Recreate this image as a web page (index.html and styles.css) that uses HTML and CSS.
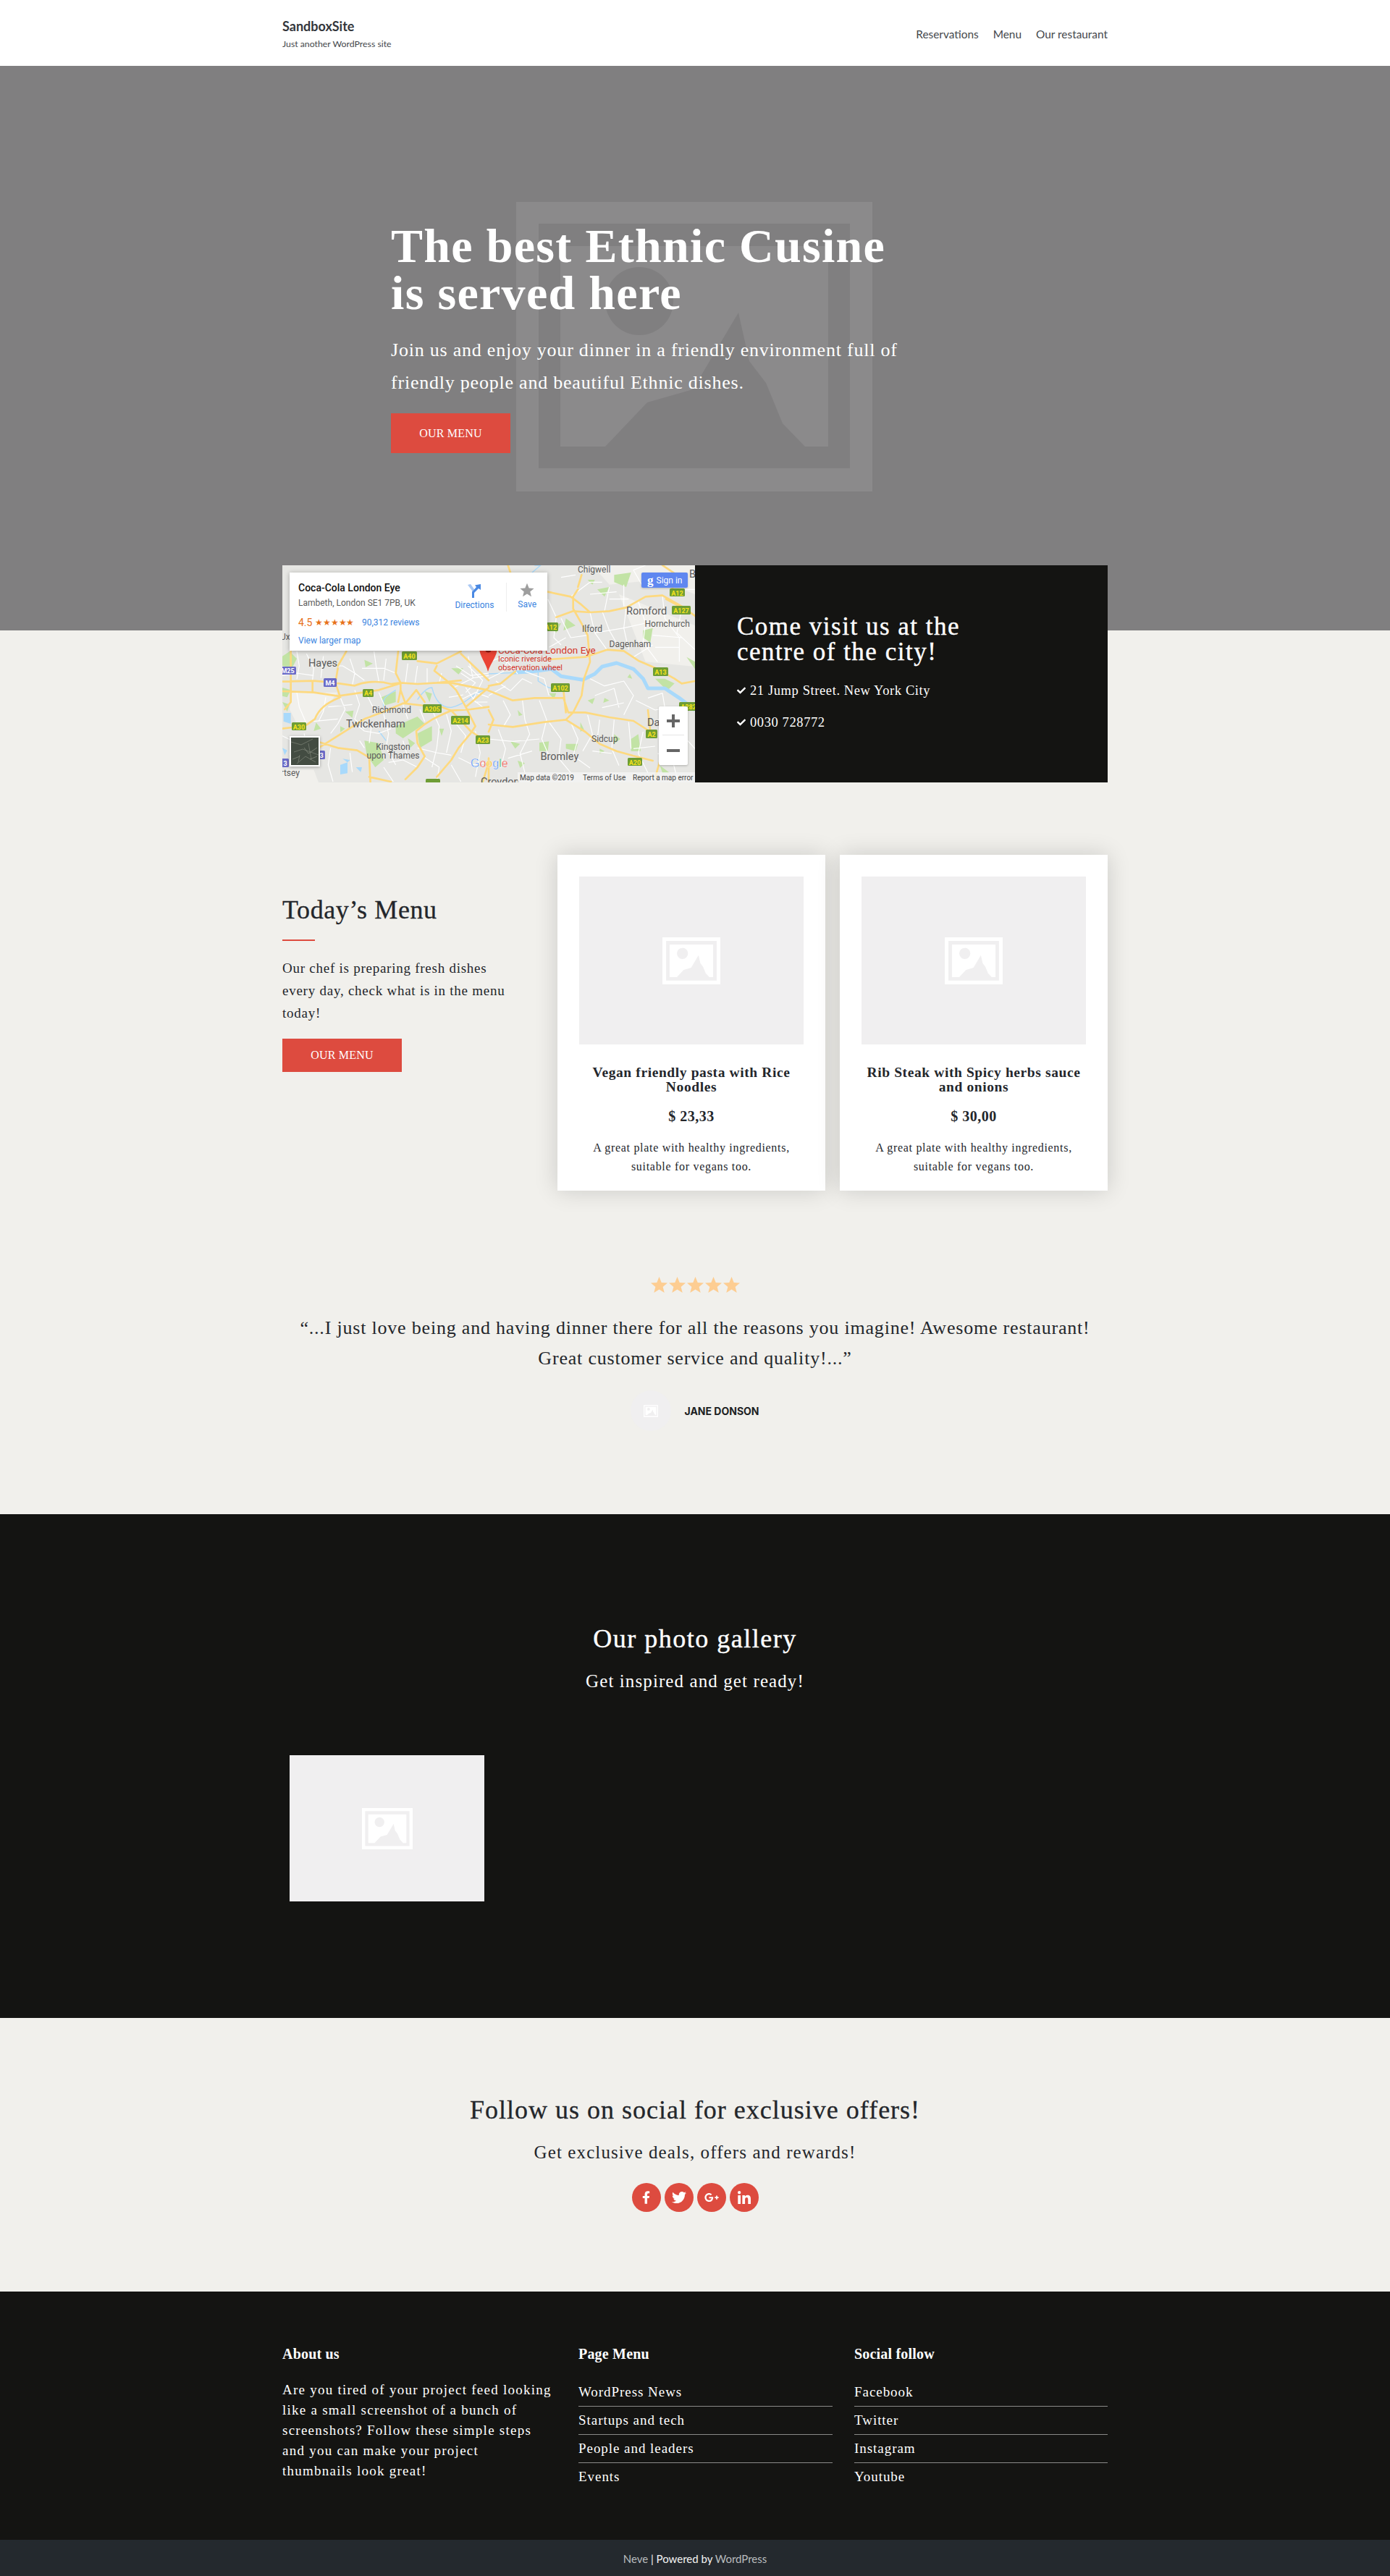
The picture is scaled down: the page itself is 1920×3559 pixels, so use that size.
FILE: index.html
```html
<!DOCTYPE html>
<html lang="en">
<head>
    <meta charset="UTF-8">
    <meta name="viewport" content="width=device-width, initial-scale=1.0">
    <title>SandboxSite</title>
    <link rel="stylesheet" href="styles.css">
</head>
<body>
    <svg class="sprites" width="0" height="0" aria-hidden="true">
        <symbol id="placeholder" viewBox="0 0 492 400">
            <path fill-rule="evenodd" d="M0 0H492V400H0Z M31 30V368H461V30Z"/>
            <path fill-rule="evenodd" d="M61 61H431V338H61Z M170 90A47 47 0 1 0 170.1 184A47 47 0 1 0 170 90Z M123 338L181 277L244 259L307 153L322 220L345 250L368 306L399 338Z"/>
        </symbol>
        <symbol id="star" viewBox="0 0 24 24">
            <path d="M12 1l3.2 8 8.3.6-6.4 5.3 2.1 8.1-7.2-4.5-7.2 4.5 2.1-8.1L.5 9.6 8.8 9z"/>
        </symbol>
        <symbol id="check" viewBox="0 0 512 512">
            <path d="M173.898 439.404l-166.4-166.4c-9.997-9.997-9.997-26.206 0-36.204l36.203-36.204c9.997-9.998 26.207-9.998 36.204 0L192 312.69 432.095 72.596c9.997-9.997 26.207-9.997 36.204 0l36.203 36.204c9.997 9.997 9.997 26.206 0 36.204l-294.4 294.401c-9.998 9.997-26.207 9.997-36.204-.001z"/>
        </symbol>
    </svg>

    <header class="site-header">
        <div class="wrap header-row">
            <div class="brand">
                <a class="brand-name" href="#">SandboxSite</a>
                <span class="brand-tag">Just another WordPress site</span>
            </div>
            <nav class="main-nav">
                <a href="#">Reservations</a>
                <a href="#">Menu</a>
                <a href="#">Our restaurant</a>
            </nav>
        </div>
    </header>

    <section class="hero">
        <svg class="hero-icon"><use href="#placeholder"/></svg>
        <div class="hero-text">
            <h1>The best Ethnic Cusine<br>is served here</h1>
            <p>Join us and enjoy your dinner in a friendly environment full of<br>friendly people and beautiful Ethnic dishes.</p>
            <a class="btn btn-hero" href="#">OUR MENU</a>
        </div>
    </section>

    <section class="wrap visit">
        <div class="map">
            <svg class="map-canvas" viewBox="0 0 570 300" width="570" height="300">
                <rect class="m-base" width="570" height="300"/>
                <!-- left half, drawn in 3x coordinates -->
                <g transform="translate(0,119) scale(.33333)">
                    <path class="m-light" d="M40 170H230L190 220L130 290L60 300L30 240Z M0 490H130L150 543H0Z"/>
                    <path class="m-green" d="M340 35L375 50L345 65Z M0 20L30 0L60 30L40 70L0 60Z M470 310L560 270L590 300L500 360L470 340Z M560 340L620 310L620 370L570 400Z M340 370L400 380L420 450L385 480L350 430Z M260 250L295 245L290 275Z M240 310L260 320L240 335Z M410 190L470 165L470 210L420 225Z M590 165L620 175L610 210Z M140 295L160 320L130 330Z M0 150L35 160L20 190L0 185Z M700 70L750 70L730 95Z M650 320L670 320L660 350Z M520 360L550 380L530 400Z M0 210L30 220L20 250Z"/>
                    <path class="m-water" d="M5 255L35 255L35 300L5 290Z M240 470L270 460L270 505L240 510Z M305 480L330 480L325 500Z M250 445L280 450L270 460Z M0 400L20 410L10 430Z"/>
                    <path class="m-river" d="M470 160C440 180 410 190 420 230 M560 200C580 170 600 150 620 150C630 190 650 235 700 232C760 220 780 180 835 160 M400 330L430 370"/>
                    <path class="m-minor" d="M60 0L70 60L60 115 M100 10L130 70L125 120 M170 20L160 110 M200 60L250 60L300 90L340 120 M280 30L300 90L290 140 M380 0L390 70L400 125 M430 30L420 120 M330 70L420 70L470 90 M0 100L60 90L130 100 M520 50L510 130 M560 60L550 130 M600 70L600 130 M660 90L650 130 M720 60L780 100L855 90 M770 20L790 110 M60 170L70 230L100 300 M180 190L170 250L150 290 M240 190L260 240L230 300L200 340 M300 160L320 220L300 280L340 320 M350 180L380 240 M400 170L430 240 M190 230L290 220 M130 290L230 280 M290 290L340 330L400 340L450 320 M420 260L440 340L430 400L470 470 M500 220L520 280 M570 240L590 290 M620 240L650 310L640 400L620 480 M680 260L700 330L680 420 M720 300L760 350L740 420 M800 330L820 420L800 520 M560 400L640 420L700 430 M590 440L650 480L640 540 M370 300L360 380 M320 370L340 400 M200 400L190 470L210 540 M280 420L290 500 M440 460L500 450L560 480 M420 480L460 540 M500 370L520 440 M730 440L790 470L850 460 M700 470L740 540 M740 90L800 130L760 170 M770 60L830 120L790 200L830 230 M710 150L790 110L855 100 M740 200L800 170L855 190 M690 190L750 180 M760 150L800 210L850 210 M0 350L40 370L30 430 M90 340L110 420"/>
                    <path class="m-road" d="M0 125L130 122L200 128L300 142C340 125 400 120 450 135L490 130L560 135L640 130L740 120 M0 165L130 170L230 185L335 170L400 160L490 132 M240 190C180 215 150 240 135 280L100 305L40 315L0 320 M150 400L230 350L340 280L420 250L500 215L590 225L660 230L700 245L780 240L855 230 M150 375L230 400L310 410L360 440L365 543 M555 330C600 290 640 270 700 245 M555 330L560 380L590 435L560 480L510 530 M35 0L35 125L35 210L10 240 M125 125V170 M230 70L220 130L240 190 M265 0L230 60 M480 0L470 90L490 130L490 160L480 210 M490 160L510 215 M640 60L630 80L680 120L720 160L760 230L800 310L780 340L730 400L700 450L640 520 M560 40L640 50L700 20L740 0 M700 245L780 330L855 380 M855 150L760 230 M740 10L855 120 M640 130L700 130L850 160 M590 210L555 160L510 215 M360 520L450 540 M855 460L830 543"/>
                </g>
                <!-- right half -->
                <g transform="translate(285,0) scale(.33333)">
                    <path class="m-light" d="M430 0H855V120L700 60L500 80Z M540 120L855 250V420L650 400Z"/>
                    <path class="m-green" d="M520 40L590 30L570 90L520 70Z M410 60L440 60L430 80Z M320 220L360 250L310 270Z M450 100L500 90L480 130Z M640 270L680 260L670 320L640 300Z M730 470L770 490L740 520L690 470Z M585 450L595 470L575 465Z M250 530L280 530L270 555Z M590 720L620 700L630 770L590 770Z M520 700L545 720L520 740Z M210 735L250 730L245 770L210 770Z M90 730L130 740L110 760Z M320 740L370 740L360 770L320 760Z M120 810L150 820L130 840Z M460 760L480 770L460 780Z M380 650L395 680L380 690Z M120 600L140 620L125 625Z M710 830L750 860L720 860Z M820 380L855 400L855 430Z M410 560L440 550L430 575Z M480 550L500 560L475 570Z M250 250L300 240L280 280Z"/>
                    <path class="m-thames" d="M100 445L180 440L260 430L300 460L390 475L440 450L470 420L530 405L600 430L640 470L660 510L730 510L790 550L855 600"/>
                    <path class="m-river" d="M205 440L205 480L245 505L260 510 M0 450L100 445 M190 0L215 0L180 30"/>
                    <path class="m-minor" d="M0 470L60 440L80 390 M30 480L90 520L140 470L180 490 M0 540L70 500 M60 560L90 620L60 670 M140 560L150 640L170 700L130 780L150 860 M210 560L240 640L220 720L250 790 M250 650L300 720L290 800L340 860 M40 680L70 760L50 840 M0 720L100 730L210 720 M80 800L180 770 M340 650L370 720L350 790L420 840 M410 620L430 700L390 770 M460 640L450 720 M520 640L510 760L540 830 M580 650L590 760 M640 690L620 780L660 860 M430 770L510 780 M420 470L480 500L560 480L600 540L560 620 M440 540L520 510L540 590 M470 590L560 570 M610 560L690 600L740 590 M660 550L720 530L730 590 M700 640L780 620L820 660 M720 720L800 700L855 760 M700 780L760 800L780 880 M600 760L690 750 M245 140L280 215L270 300L300 330 M300 220L340 300L410 290 M340 130L420 70L470 70 M420 195L440 280L490 350 M470 190L500 270L540 340 M570 175L560 260L580 350 M620 150L650 240L640 320L700 400 M720 125L730 220L790 300L790 400 M800 180L780 280L855 350 M440 280L560 260L650 240 M640 90L600 20L650 0 M500 90L480 190 M560 80L560 170 M420 120L530 110 M800 100L855 100 M300 50L360 40 M250 340L320 300 M500 140L580 140 M680 290L800 300 M690 340L790 340 M600 380L680 330 M0 400L60 380L120 450 M150 440L230 470L250 540"/>
                    <path class="m-road" d="M245 110L340 130L380 160L420 195L500 190L570 175L650 130L720 125L800 170L855 210 M280 215L350 190L420 195 M350 130L350 180L390 250L410 290L420 400L395 470L385 540L350 610L320 640 M370 100L350 130 M385 40L370 90 M250 390L400 380L490 350L560 355L620 395L700 430L770 470L800 490L855 480 M0 500L50 490L110 440 M0 520L100 560L190 550L310 550L330 610L400 610L500 630L600 645L670 690 M320 640L230 650L100 670L0 660 M320 640L400 690L460 740L530 770L600 790L680 810 M310 520L320 610 M720 0L780 40L760 100 M735 140L790 170 M690 880L710 810L720 790 M0 800V900 M80 0L90 30 M670 690L660 600 M0 690L20 640L0 600"/>
                </g>
                <g class="m-shields">
                    <rect class="m-moto" x="-4" y="140" width="23" height="11" rx="1.5"/><text class="m-moto-t" x="7.5" y="149">M25</text>
                    <rect class="m-moto" x="57" y="156" width="18" height="12" rx="1.5"/><text class="m-moto-t" x="66" y="166">M4</text>
                    <rect class="m-moto" x="44" y="256" width="15" height="12" rx="1.5"/><text class="m-moto-t" x="54" y="266">3</text>
                    <rect class="m-moto" x="-8" y="267" width="17" height="12" rx="1.5"/><text class="m-moto-t" x="4" y="277">3</text>
                    <rect class="m-a" x="111" y="171" width="15" height="11" rx="1.5"/><text class="m-a-t" x="118.5" y="180">A4</text>
                    <rect class="m-a" x="165" y="119" width="21" height="12" rx="1.5"/><text class="m-a-t" x="175.5" y="129">A40</text>
                    <rect class="m-a" x="13" y="217" width="20" height="11" rx="1.5"/><text class="m-a-t" x="23" y="226.5">A30</text>
                    <rect class="m-a" x="194" y="192" width="26" height="12" rx="1.5"/><text class="m-a-t" x="207" y="202">A205</text>
                    <rect class="m-a" x="233" y="208" width="26" height="12" rx="1.5"/><text class="m-a-t" x="246" y="218">A214</text>
                    <rect class="m-a" x="267" y="235" width="20" height="12" rx="1.5"/><text class="m-a-t" x="277" y="245">A23</text>
                    <rect class="m-a" x="198" y="295" width="20" height="12" rx="1.5"/>
                    <rect class="m-a" x="364" y="79" width="17" height="12" rx="1.5"/><text class="m-a-t" x="371" y="89">A12</text>
                    <rect class="m-a" x="535" y="32" width="21" height="11" rx="1.5"/><text class="m-a-t" x="545.5" y="41.5">A12</text>
                    <rect class="m-a" x="538" y="56" width="26" height="12" rx="1.5"/><text class="m-a-t" x="551" y="66">A127</text>
                    <rect class="m-a" x="512" y="141" width="21" height="12" rx="1.5"/><text class="m-a-t" x="522.5" y="151">A13</text>
                    <rect class="m-a" x="371" y="163" width="26" height="12" rx="1.5"/><text class="m-a-t" x="384" y="173">A102</text>
                    <rect class="m-a" x="502" y="227" width="16" height="12" rx="1.5"/><text class="m-a-t" x="510" y="237">A2</text>
                    <rect class="m-a" x="477" y="266" width="20" height="11" rx="1.5"/><text class="m-a-t" x="487" y="275.5">A20</text>
                    <rect class="m-a" x="548" y="189" width="26" height="12" rx="1.5"/><text class="m-a-t" x="561" y="199">A282</text>
                </g>
                <g class="m-labels">
                    <text class="m-big" x="36" y="140">Hayes</text>
                    <text class="m-big" x="88" y="224">Twickenham</text>
                    <text x="124" y="204">Richmond</text>
                    <text x="153" y="255" text-anchor="middle">Kingston</text>
                    <text x="153" y="267" text-anchor="middle">upon Thames</text>
                    <text x="24" y="291" text-anchor="end">Chertsey</text>
                    <text x="408" y="10">Chigwell</text>
                    <text class="m-big" x="475" y="68">Romford</text>
                    <text x="500.5" y="85">Hornchurch</text>
                    <text x="414" y="92">Ilford</text>
                    <text x="451.5" y="113">Dagenham</text>
                    <text x="427" y="244">Sidcup</text>
                    <text class="m-big" x="356.5" y="269">Bromley</text>
                    <text class="m-big" x="504" y="222">Dartford</text>
                    <text class="m-big" x="274" y="304">Croydon</text>
                    <text class="m-big" x="562" y="17">B</text>
                    <text x="-3" y="103">Ux</text>
                </g>
                <path class="m-pin" d="M284 147C281 134 272 126 272 113A12.5 12.5 0 0 1 297 113C297 126 288 134 284 147Z"/>
                <circle class="m-pin-dot" cx="284.5" cy="116" r="4.5"/>
                <g class="m-poi">
                    <text class="m-poi-title" x="298" y="122">Coca-Cola London Eye</text>
                    <text x="298" y="133">Iconic riverside</text>
                    <text x="298" y="144.5">observation wheel</text>
                </g>
                <text class="m-google" x="260" y="279"><tspan class="g-blue">G</tspan><tspan class="g-red">o</tspan><tspan class="g-yellow">o</tspan><tspan class="g-blue">g</tspan><tspan class="g-green">l</tspan><tspan class="g-red">e</tspan></text>
                <rect class="m-attr-bg" x="325" y="286" width="245" height="14"/>
                <g class="m-attr">
                    <text x="328" y="296.5">Map data ©2019</text>
                    <text x="415" y="296.5">Terms of Use</text>
                    <text x="484" y="296.5">Report a map error</text>
                </g>
            </svg>

            <div class="map-card">
                <div class="map-place">
                    <div class="map-title">Coca-Cola London Eye</div>
                    <div class="map-addr">Lambeth, London SE1 7PB, UK</div>
                    <div class="map-rating"><b>4.5</b><span class="map-stars">★★★★★</span><a href="#">90,312 reviews</a></div>
                    <a class="map-larger" href="#">View larger map</a>
                </div>
                <div class="map-actions">
                    <a class="map-dir" href="#">
                        <svg width="18" height="19" viewBox="0 0 18 19"><path class="dir-light" d="M0 1L4 0L9 7V19H6V9Z"/><path class="dir-dark" d="M6 19V11L12 4L10 1.500L18 0V8L15 6L9 12V19Z"/></svg>
                        Directions
                    </a>
                    <a class="map-save" href="#">
                        <svg width="20" height="20" viewBox="0 0 24 24"><use href="#star"/></svg>
                        Save
                    </a>
                </div>
            </div>

            <a class="map-signin" href="#"><span class="g-mark">g</span>Sign in</a>
            <div class="map-zoom">
                <span class="zoom-plus"></span>
                <span class="zoom-sep"></span>
                <span class="zoom-minus"></span>
            </div>
            <div class="map-thumb">
                <svg width="38" height="38" viewBox="0 0 38 38">
                    <rect width="38" height="38" fill="#434c42"/>
                    <path d="M0 6L14 10L30 2M4 20L16 16L38 24M8 36L20 26L34 34M24 8L28 30M12 24L10 34" stroke="#6d7468" fill="none"/>
                    <path d="M18 14L24 22L36 14M2 30L12 26M26 30L36 26" stroke="#8b9184" stroke-width=".7" fill="none"/>
                </svg>
            </div>
        </div>
        <div class="visit-info">
            <h2>Come visit us at the<br>centre of the city!</h2>
            <ul class="visit-list">
                <li><svg class="check"><use href="#check"/></svg>21 Jump Street. New York City</li>
                <li><svg class="check"><use href="#check"/></svg>0030 728772</li>
            </ul>
        </div>
    </section>

    <section class="wrap menu">
        <div class="menu-intro">
            <h2>Today’s Menu</h2>
            <span class="menu-rule"></span>
            <p>Our chef is preparing fresh dishes<br>every day, check what is in the menu<br>today!</p>
            <a class="btn btn-menu" href="#">OUR MENU</a>
        </div>
        <article class="dish">
            <div class="thumb dish-thumb"><svg class="dish-icon"><use href="#placeholder"/></svg></div>
            <h3>Vegan friendly pasta with Rice<br>Noodles</h3>
            <div class="dish-price">$ 23,33</div>
            <p>A great plate with healthy ingredients,<br>suitable for vegans too.</p>
        </article>
        <article class="dish">
            <div class="thumb dish-thumb"><svg class="dish-icon"><use href="#placeholder"/></svg></div>
            <h3>Rib Steak with Spicy herbs sauce<br>and onions</h3>
            <div class="dish-price">$ 30,00</div>
            <p>A great plate with healthy ingredients,<br>suitable for vegans too.</p>
        </article>
    </section>

    <section class="review">
        <div class="review-stars">
            <svg><use href="#star"/></svg><svg><use href="#star"/></svg><svg><use href="#star"/></svg><svg><use href="#star"/></svg><svg><use href="#star"/></svg>
        </div>
        <blockquote>“...I just love being and having dinner there for all the reasons you imagine! Awesome restaurant!<br>Great customer service and quality!...”</blockquote>
        <div class="review-person">
            <div class="thumb avatar"><svg class="avatar-icon"><use href="#placeholder"/></svg></div>
            <span class="person-name">JANE DONSON</span>
        </div>
    </section>

    <section class="gallery">
        <div class="wrap">
            <h2>Our photo gallery</h2>
            <p class="lead">Get inspired and get ready!</p>
            <div class="thumb gallery-thumb"><svg class="gallery-icon"><use href="#placeholder"/></svg></div>
        </div>
    </section>

    <section class="social">
        <h2>Follow us on social for exclusive offers!</h2>
        <p class="lead">Get exclusive deals, offers and rewards!</p>
        <div class="social-icons">
            <a href="#"><svg width="11" height="18" viewBox="0 0 320 512"><path d="M279.14 288l14.22-92.66h-88.91v-60.13c0-25.35 12.42-50.06 52.24-50.06h40.42V6.26S260.43 0 225.36 0c-73.22 0-121.08 44.38-121.08 124.72v70.62H22.89V288h81.39v224h100.17V288z"/></svg></a>
            <a href="#"><svg width="20" height="20" viewBox="0 0 512 512"><path d="M459.37 151.716c.325 4.548.325 9.097.325 13.645 0 138.72-105.583 298.558-298.558 298.558-59.452 0-114.68-17.219-161.137-47.106 8.447.974 16.568 1.299 25.34 1.299 49.055 0 94.213-16.568 130.274-44.832-46.132-.975-84.792-31.188-98.112-72.772 6.498.974 12.995 1.624 19.818 1.624 9.421 0 18.843-1.3 27.614-3.573-48.081-9.747-84.143-51.98-84.143-102.985v-1.299c13.969 7.797 30.214 12.67 47.431 13.319-28.264-18.843-46.781-51.005-46.781-87.391 0-19.492 5.197-37.36 14.294-52.954 51.655 63.675 129.3 105.258 216.365 109.807-1.624-7.797-2.599-15.918-2.599-24.04 0-57.828 46.782-104.934 104.934-104.934 30.213 0 57.502 12.67 76.67 33.137 23.715-4.548 46.456-13.32 66.599-25.34-7.798 24.366-24.366 44.833-46.132 57.827 21.117-2.273 41.584-8.122 60.426-16.243-14.292 20.791-32.161 39.308-52.628 54.253z"/></svg></a>
            <a href="#"><svg width="24" height="16" viewBox="0 0 640 512"><path d="M386.061 228.496c1.834 9.692 3.143 19.384 3.143 31.956C389.204 370.205 315.599 448 204.8 448c-106.084 0-192-85.915-192-192s85.916-192 192-192c51.864 0 95.083 18.859 128.611 50.292l-52.126 50.03c-14.145-13.621-39.028-29.599-76.485-29.599-65.484 0-118.92 54.221-118.92 121.277 0 67.056 53.436 121.277 118.92 121.277 75.961 0 104.513-54.745 108.965-82.773H204.8v-66.009h181.261zm185.406 6.437V179.2h-56.001v55.733h-55.733v56.001h55.733v55.733h56.001v-55.733H627.2v-56.001h-55.733z"/></svg></a>
            <a href="#"><svg width="18" height="18" viewBox="0 0 448 448"><path d="M100.28 448H7.4V148.9h92.88zM53.79 108.1C24.09 108.1 0 83.5 0 53.8a53.79 53.79 0 0 1 107.58 0c0 29.7-24.1 54.3-53.79 54.3zM447.9 448h-92.68V302.4c0-34.7-.7-79.2-48.29-79.2-48.29 0-55.69 37.7-55.69 76.7V448h-92.78V148.9h89.08v40.8h1.3c12.4-23.5 42.69-48.3 87.88-48.3 94 0 111.28 61.9 111.28 142.3V448z"/></svg></a>
        </div>
    </section>

    <footer class="site-footer">
        <div class="wrap footer-cols">
            <div>
                <h4>About us</h4>
                <p class="footer-about">Are you tired of your project feed looking<br>like a small screenshot of a bunch of<br>screenshots? Follow these simple steps<br>and you can make your project<br>thumbnails look great!</p>
            </div>
            <div>
                <h4>Page Menu</h4>
                <ul class="footer-list">
                    <li><a href="#">WordPress News</a></li>
                    <li><a href="#">Startups and tech</a></li>
                    <li><a href="#">People and leaders</a></li>
                    <li><a href="#">Events</a></li>
                </ul>
            </div>
            <div>
                <h4>Social follow</h4>
                <ul class="footer-list">
                    <li><a href="#">Facebook</a></li>
                    <li><a href="#">Twitter</a></li>
                    <li><a href="#">Instagram</a></li>
                    <li><a href="#">Youtube</a></li>
                </ul>
            </div>
        </div>
        <div class="footer-bar"><a href="#">Neve</a> | Powered by <a href="#">WordPress</a></div>
    </footer>
</body>
</html>
```

FILE: styles.css
```css
* {
    box-sizing: border-box;
}

body {
    margin: 0;
    background-color: #f1f0ec;
    color: #23262b;
    font-family: "Liberation Serif", "Times New Roman", serif;
    font-size: 18px;
}

a {
    color: inherit;
    text-decoration: none;
}

h1, h2, h3, h4, p, ul, blockquote {
    margin: 0;
    padding: 0;
}

ul {
    list-style: none;
}

.sprites {
    position: absolute;
}

.wrap {
    width: 1140px;
    margin: 0 auto;
}

/* header */
.site-header {
    height: 91px;
    background: #fff;
    font-family: "Lato", "Noto Sans", sans-serif;
}

.header-row {
    display: flex;
    justify-content: space-between;
}

.brand {
    display: flex;
    flex-direction: column;
    padding-top: 24px;
}

.brand-name {
    font-size: 18px;
    line-height: 24px;
    font-weight: 700;
    color: #33363b;
}

.brand-tag {
    margin-top: 3px;
    font-size: 12.3px;
    line-height: 20px;
    color: #44474b;
}

.main-nav {
    display: flex;
    gap: 20px;
    padding-top: 36px;
    font-size: 15.4px;
    line-height: 22px;
    color: #45484c;
}

/* hero */
.hero {
    position: relative;
    height: 780px;
    padding: 216px 0 0 540px;
    background: #807f80;
    color: #fff;
}

.hero-icon {
    position: absolute;
    left: 713px;
    top: 188px;
    width: 492px;
    height: 400px;
    fill: #8b8a8b;
}

.hero-text {
    position: relative;
}

.hero h1 {
    margin-bottom: 24px;
    font-size: 66px;
    line-height: 65px;
    letter-spacing: 1.3px;
}

.hero p {
    margin-bottom: 20px;
    font-size: 26px;
    line-height: 45px;
    letter-spacing: .78px;
}

.btn {
    display: flex;
    align-items: center;
    justify-content: center;
    width: 165px;
    background: #dd4b3f;
    color: #fff;
    font-size: 16px;
    letter-spacing: .2px;
}

.btn-hero {
    height: 55px;
}

.btn-menu {
    height: 46px;
}

/* map + address */
.visit {
    position: relative;
    display: flex;
    height: 300px;
    margin-top: -90px;
}

.map {
    position: relative;
    width: 570px;
    height: 300px;
    overflow: hidden;
    font-family: "Roboto", sans-serif;
}

.map-canvas {
    display: block;
    font-family: "Roboto", sans-serif;
}

.m-base { fill: #e6e6e3; }
.m-light { fill: #f1f0ec; }
.m-green { fill: #c2e3a5; }
.m-water { fill: #a8d9fb; }
.m-river { fill: none; stroke: #a8d9fb; stroke-width: 4; }
.m-thames { fill: none; stroke: #a8d9fb; stroke-width: 15; stroke-linejoin: round; }
.m-minor { fill: none; stroke: #fff; stroke-width: 3.5; stroke-linejoin: round; }
.m-road { fill: none; stroke: #fdd97f; stroke-width: 8; stroke-linejoin: round; stroke-linecap: round; }

.m-moto { fill: #6a6bc7; }
.m-a { fill: #6f9d35; }

.m-shields text {
    font-size: 9px;
    font-weight: 700;
    text-anchor: middle;
}

.m-moto-t { fill: #fff; }
.m-a-t { fill: #f5e21b; }

.m-labels text {
    font-size: 12px;
    fill: #5b5b5b;
}

.m-labels .m-big {
    font-size: 14.5px;
}

.m-pin { fill: #ea4335; }
.m-pin-dot { fill: #8e1a12; }

.m-poi text {
    font-size: 11px;
    fill: #d3342a;
}

.m-poi .m-poi-title {
    font-size: 13.5px;
}

.m-google {
    font-family: "Liberation Sans", sans-serif;
    font-size: 16px;
    stroke: #fff;
    stroke-width: .4px;
}

.g-blue { fill: #4285f4; }
.g-red { fill: #ea4335; }
.g-yellow { fill: #fbbc05; }
.g-green { fill: #34a853; }

.m-attr-bg { fill: rgba(245, 245, 245, .75); }

.m-attr text {
    font-size: 10px;
    fill: #444;
}

.map-card {
    position: absolute;
    left: 10px;
    top: 10px;
    display: flex;
    justify-content: space-between;
    width: 356px;
    height: 108px;
    padding: 12px 15px 0 12px;
    background: #fff;
    box-shadow: 0 1px 6px rgba(0, 0, 0, .3);
}

.map-title {
    font-size: 14px;
    line-height: 18px;
    font-weight: 500;
    color: #111;
}

.map-addr {
    margin-top: 3px;
    font-size: 12px;
    line-height: 18px;
    color: #5b5b5b;
}

.map-rating {
    display: flex;
    align-items: center;
    margin-top: 9px;
    height: 18px;
    font-size: 12px;
    color: #3a84df;
}

.map-rating b {
    font-size: 14px;
    font-weight: 400;
    color: #e7711b;
}

.map-stars {
    margin: 0 11px 0 4px;
    font-size: 12px;
    letter-spacing: -.3px;
    color: #e7711b;
}

.map-larger {
    display: block;
    margin-top: 7px;
    font-size: 12px;
    line-height: 18px;
    color: #3a84df;
}

.map-actions {
    display: flex;
    padding-top: 2px;
    font-size: 12px;
    color: #3a84df;
}

.map-dir, .map-save {
    display: flex;
    flex-direction: column;
    align-items: center;
    gap: 3px;
    height: 40px;
}

.map-dir {
    padding: 2px 17px 0 0;
    border-right: 1px solid #eee;
}

.dir-light { fill: #a9c8f3; }
.dir-dark { fill: #4a89e3; }

.map-save {
    padding-left: 15px;
}

.map-save svg {
    fill: #9e9e9e;
}

.map-signin {
    position: absolute;
    left: 496px;
    top: 10px;
    display: flex;
    align-items: center;
    gap: 4px;
    width: 64px;
    height: 21px;
    padding-left: 8px;
    border-radius: 2px;
    background: #5f87f0;
    color: #fff;
    font-size: 12px;
    box-shadow: 0 1px 3px rgba(0, 0, 0, .2);
}

.g-mark {
    font-family: "Liberation Serif", serif;
    font-size: 17px;
    font-weight: 700;
    line-height: 17px;
}

.map-zoom {
    position: absolute;
    left: 520px;
    top: 195px;
    display: flex;
    flex-direction: column;
    align-items: center;
    width: 40px;
    height: 81px;
    padding-top: 11px;
    border-radius: 2px;
    background: #fff;
    box-shadow: 0 1px 3px rgba(0, 0, 0, .25);
}

.zoom-plus {
    width: 18px;
    height: 18px;
    background: linear-gradient(#666, #666) center / 18px 4px no-repeat, linear-gradient(#666, #666) center / 4px 18px no-repeat;
}

.zoom-sep {
    width: 30px;
    height: 1px;
    margin: 10px 0 19px;
    background: #e6e6e6;
}

.zoom-minus {
    width: 18px;
    height: 4px;
    background: #666;
}

.map-thumb {
    position: absolute;
    left: 10px;
    top: 236px;
    width: 42px;
    height: 42px;
    border: 2px solid #fff;
    box-shadow: 0 1px 4px rgba(0, 0, 0, .3);
}

.map-thumb svg {
    display: block;
}

.visit-info {
    width: 570px;
    padding: 67px 0 0 58px;
    background: #141412;
    color: #fff;
}

.visit-info h2 {
    font-size: 35px;
    line-height: 35px;
    font-weight: 400;
    letter-spacing: 1.5px;
    -webkit-text-stroke: .4px #fff;
}

.visit-list {
    margin-top: 14px;
    font-size: 18.5px;
    line-height: 44px;
    letter-spacing: .6px;
}

.visit-list li {
    display: flex;
    align-items: center;
}

.check {
    width: 12px;
    height: 12px;
    margin-right: 6px;
    fill: #fff;
}

/* menu */
.menu {
    display: flex;
    gap: 20px;
    padding-top: 100px;
}

.menu-intro {
    width: 360px;
    padding-top: 56px;
}

.menu-intro h2 {
    font-size: 36px;
    line-height: 40px;
    font-weight: 400;
    letter-spacing: .6px;
    -webkit-text-stroke: .3px #23262b;
}

.menu-rule {
    display: block;
    width: 45px;
    height: 2px;
    margin: 21px 0 22px;
    background: #dd4b3f;
}

.menu-intro p {
    margin-bottom: 20px;
    font-size: 19px;
    line-height: 31px;
    letter-spacing: .75px;
}

.dish {
    width: 370px;
    height: 464px;
    padding: 30px 30px 20px;
    background: #fff;
    box-shadow: 0 0 30px rgba(0, 0, 0, .16);
    text-align: center;
}

.thumb {
    display: flex;
    align-items: center;
    justify-content: center;
    background: #f0eff0;
}

.thumb svg {
    fill: #fff;
}

.dish-thumb {
    height: 232px;
    margin-bottom: 29px;
}

.dish-icon {
    width: 80px;
    height: 65px;
}

.dish h3 {
    font-size: 19.5px;
    line-height: 20px;
    letter-spacing: .6px;
}

.dish-price {
    margin: 18px 0 19px;
    font-size: 20px;
    line-height: 24px;
    font-weight: 700;
    letter-spacing: .5px;
}

.dish p {
    font-size: 16px;
    line-height: 26px;
    letter-spacing: .7px;
}

/* testimonial */
.review {
    height: 447px;
    padding-top: 118px;
    text-align: center;
}

.review-stars {
    display: flex;
    justify-content: center;
    height: 22px;
}

.review-stars svg {
    width: 25px;
    height: 24px;
    fill: #fdcd92;
}

.review blockquote {
    margin-top: 29px;
    font-size: 26px;
    line-height: 42px;
    letter-spacing: .8px;
}

.review-person {
    display: flex;
    align-items: center;
    justify-content: center;
    gap: 18px;
    margin-top: 23px;
}

.avatar {
    width: 56px;
    height: 56px;
    border-radius: 50%;
}

.avatar-icon {
    width: 20px;
    height: 17px;
}

.person-name {
    font-family: "Inter", sans-serif;
    font-size: 14px;
    font-weight: 700;
    color: #1d1f23;
}

/* gallery + social */
.gallery {
    height: 696px;
    padding-top: 150px;
    background: #141412;
    color: #fff;
    text-align: center;
}

.gallery h2, .social h2 {
    font-size: 36px;
    line-height: 44px;
    font-weight: 400;
    letter-spacing: 1px;
}

.gallery h2 {
    letter-spacing: 1.5px;
    -webkit-text-stroke: .4px #fff;
}

.social h2 {
    -webkit-text-stroke: .3px #23262b;
}

.lead {
    margin-top: 19px;
    font-size: 25px;
    line-height: 36px;
    letter-spacing: 1.1px;
}

.gallery-thumb {
    width: 269px;
    height: 202px;
    margin: 84px 0 0 10px;
}

.gallery-icon {
    width: 70px;
    height: 57px;
}

.social {
    height: 378px;
    padding-top: 105px;
    text-align: center;
}

.social-icons {
    display: flex;
    justify-content: center;
    gap: 5px;
    margin-top: 24px;
}

.social-icons a {
    display: flex;
    align-items: center;
    justify-content: center;
    width: 40px;
    height: 40px;
    border-radius: 50%;
    background: #dd4b3f;
    fill: #fff;
}

/* footer */
.site-footer {
    background: #141412;
    color: #fff;
}

.footer-cols {
    display: grid;
    grid-template-columns: 379px 351px 350px;
    gap: 30px;
    height: 343px;
    padding-top: 74px;
}

.footer-cols h4 {
    margin-bottom: 24px;
    font-size: 20px;
    line-height: 24px;
    letter-spacing: .2px;
}

.footer-about {
    font-size: 19px;
    line-height: 28px;
    letter-spacing: 1.25px;
}

.footer-list {
    margin-top: -2px;
    font-size: 19px;
    letter-spacing: .95px;
}

.footer-list li {
    height: 39px;
    line-height: 38px;
    border-bottom: 1px solid #8a8a88;
}

.footer-list li:last-child {
    border-bottom: none;
}

.footer-bar {
    height: 50px;
    background: #24292e;
    font-family: "Lato", "Noto Sans", sans-serif;
    font-size: 15px;
    line-height: 52px;
    text-align: center;
    color: #f4f4f4;
}

.footer-bar a {
    color: #b9bcbe;
}
```
